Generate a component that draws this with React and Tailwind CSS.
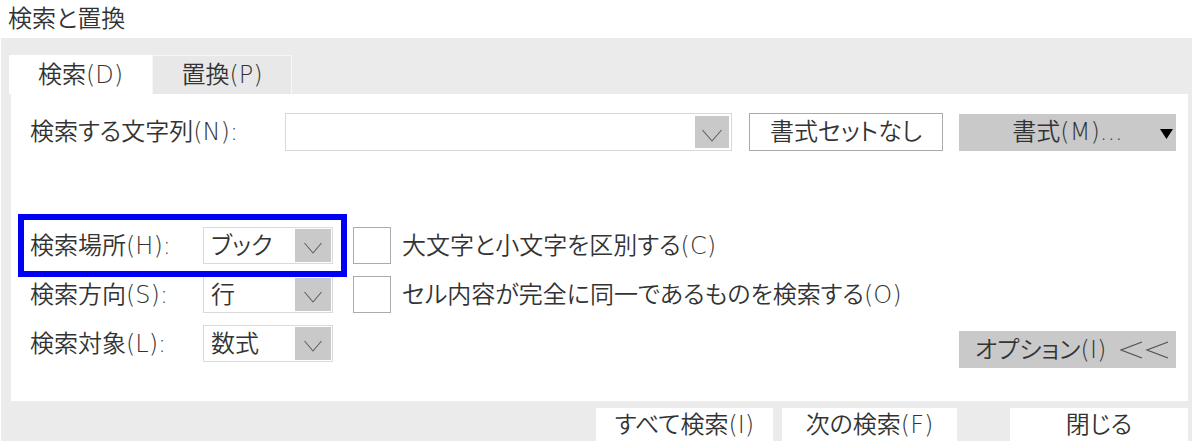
import React from 'react';

const Chevron = ({ w = 20, h = 12 }) => (
  <svg width={w} height={h + 2} viewBox={`0 0 ${w} ${h + 2}`}>
    <polyline points={`0.5,1 ${w / 2},${h} ${w - 0.5},1`} fill="none" stroke="#5f5f5f" strokeWidth="1.1" />
  </svg>
);

const SmallCombo = ({ value }) => (
  <div className="w-[130px] h-[37px] border border-[#dadada] bg-white flex items-stretch">
    <div className="flex-1 flex items-center pl-[7px] leading-none">{value}</div>
    <div className="w-[36px] my-[1px] mr-[1px] bg-[#c9c9c9] flex items-center justify-center pt-[6px]">
      <Chevron w={18} h={11} />
    </div>
  </div>
);

const CheckBox = () => (
  <div className="w-[38px] h-[37px] border border-[#ababab] bg-white" />
);

const Button = ({ children, w }) => (
  <div className={`${w} h-[33px] bg-white flex items-center justify-center leading-none`}>{children}</div>
);

export default function App() {
  const rows = [
    { label: '検索場所(H):', value: 'ブック', check: '大文字と小文字を区別する(C)' },
    { label: '検索方向(S):', value: '行', check: 'セル内容が完全に同一であるものを検索する(O)' },
    { label: '検索対象(L):', value: '数式' },
  ];

  return (
    <div className="w-[1200px] h-[448px] bg-white overflow-hidden text-[24px] font-[350] text-[#333333] font-['DejaVu_Sans','Noto_Sans_CJK_JP',sans-serif] [font-feature-settings:'palt']">
      <div className="h-[38px] pl-[8px] flex items-center leading-none">検索と置換</div>

      <div className="ml-[1px] w-[1191px] h-[403px] bg-[#ebebeb] pt-[17px] flex flex-col">
        {/* tabs */}
        <div className="ml-[8px] flex h-[39px]">
          <div className="w-[143px] bg-white flex items-center justify-center leading-none">検索(D)</div>
          <div className="w-[140px] bg-[#e8e8e8] border border-b-0 border-[#f6f6f6] flex items-center justify-center leading-none">置換(P)</div>
        </div>

        {/* panel */}
        <div className="ml-[10px] w-[1177px] h-[307px] bg-white relative pl-[19px] pt-[19px]">
          <div className="flex items-center">
            <div className="w-[255px] leading-none">検索する文字列(N):</div>
            <div className="w-[447px] h-[38px] border border-[#d8d8d8] flex justify-end">
              <div className="w-[34px] my-[2px] mr-[2px] bg-[#c9c9c9] flex items-center justify-center pt-[8px]">
                <Chevron w={20} h={12} />
              </div>
            </div>
            <div className="ml-[17px] w-[194px] h-[38px] border border-[#a9a9a9] flex items-center justify-center leading-none">書式セットなし</div>
            <div className="ml-[16px] w-[217px] h-[37px] bg-[#c9c9c9] relative flex items-center justify-center leading-none">
              書式(M)...
              <svg className="absolute right-[3px] top-[15px]" width="13" height="10" viewBox="0 0 13 10">
                <polygon points="0,0 13,0 6.5,10" fill="#000" />
              </svg>
            </div>
          </div>

          <div className="mt-[76px] flex flex-col gap-[12px]">
            {rows.map((r, i) => (
              <div key={i} className="flex items-start">
                <div className="w-[173px] h-[37px] flex items-center leading-none">{r.label}</div>
                <SmallCombo value={r.value} />
                {r.check && (
                  <>
                    <div className="ml-[20px]"><CheckBox /></div>
                    <div className="ml-[11px] h-[37px] flex items-center leading-none">{r.check}</div>
                  </>
                )}
                {!r.check && (
                  <div className="ml-auto mr-[12px] mt-[6px] w-[217px] h-[37px] bg-[#c9c9c9] flex items-center pl-[16px] leading-none">
                    オプション(I)
                    <svg className="ml-[14px]" width="50" height="18" viewBox="0 0 50 18">
                      <polyline points="22,1 1,9 22,17" fill="none" stroke="#505050" strokeWidth="1.2" />
                      <polyline points="48,1 27,9 48,17" fill="none" stroke="#505050" strokeWidth="1.2" />
                    </svg>
                  </div>
                )}
              </div>
            ))}
          </div>

          {/* highlight frame */}
          <div className="absolute left-[7px] top-[120px] w-[329px] h-[63px] border-[6px] border-[#0000f5]" />
        </div>

        {/* bottom buttons */}
        <div className="mt-[7px] ml-[595px] flex">
          <Button w="w-[177px]">すべて検索(I)</Button>
          <div className="ml-[9px]"><Button w="w-[175px]">次の検索(F)</Button></div>
          <div className="ml-[53px]"><Button w="w-[178px]">閉じる</Button></div>
        </div>
      </div>
    </div>
  );
}
